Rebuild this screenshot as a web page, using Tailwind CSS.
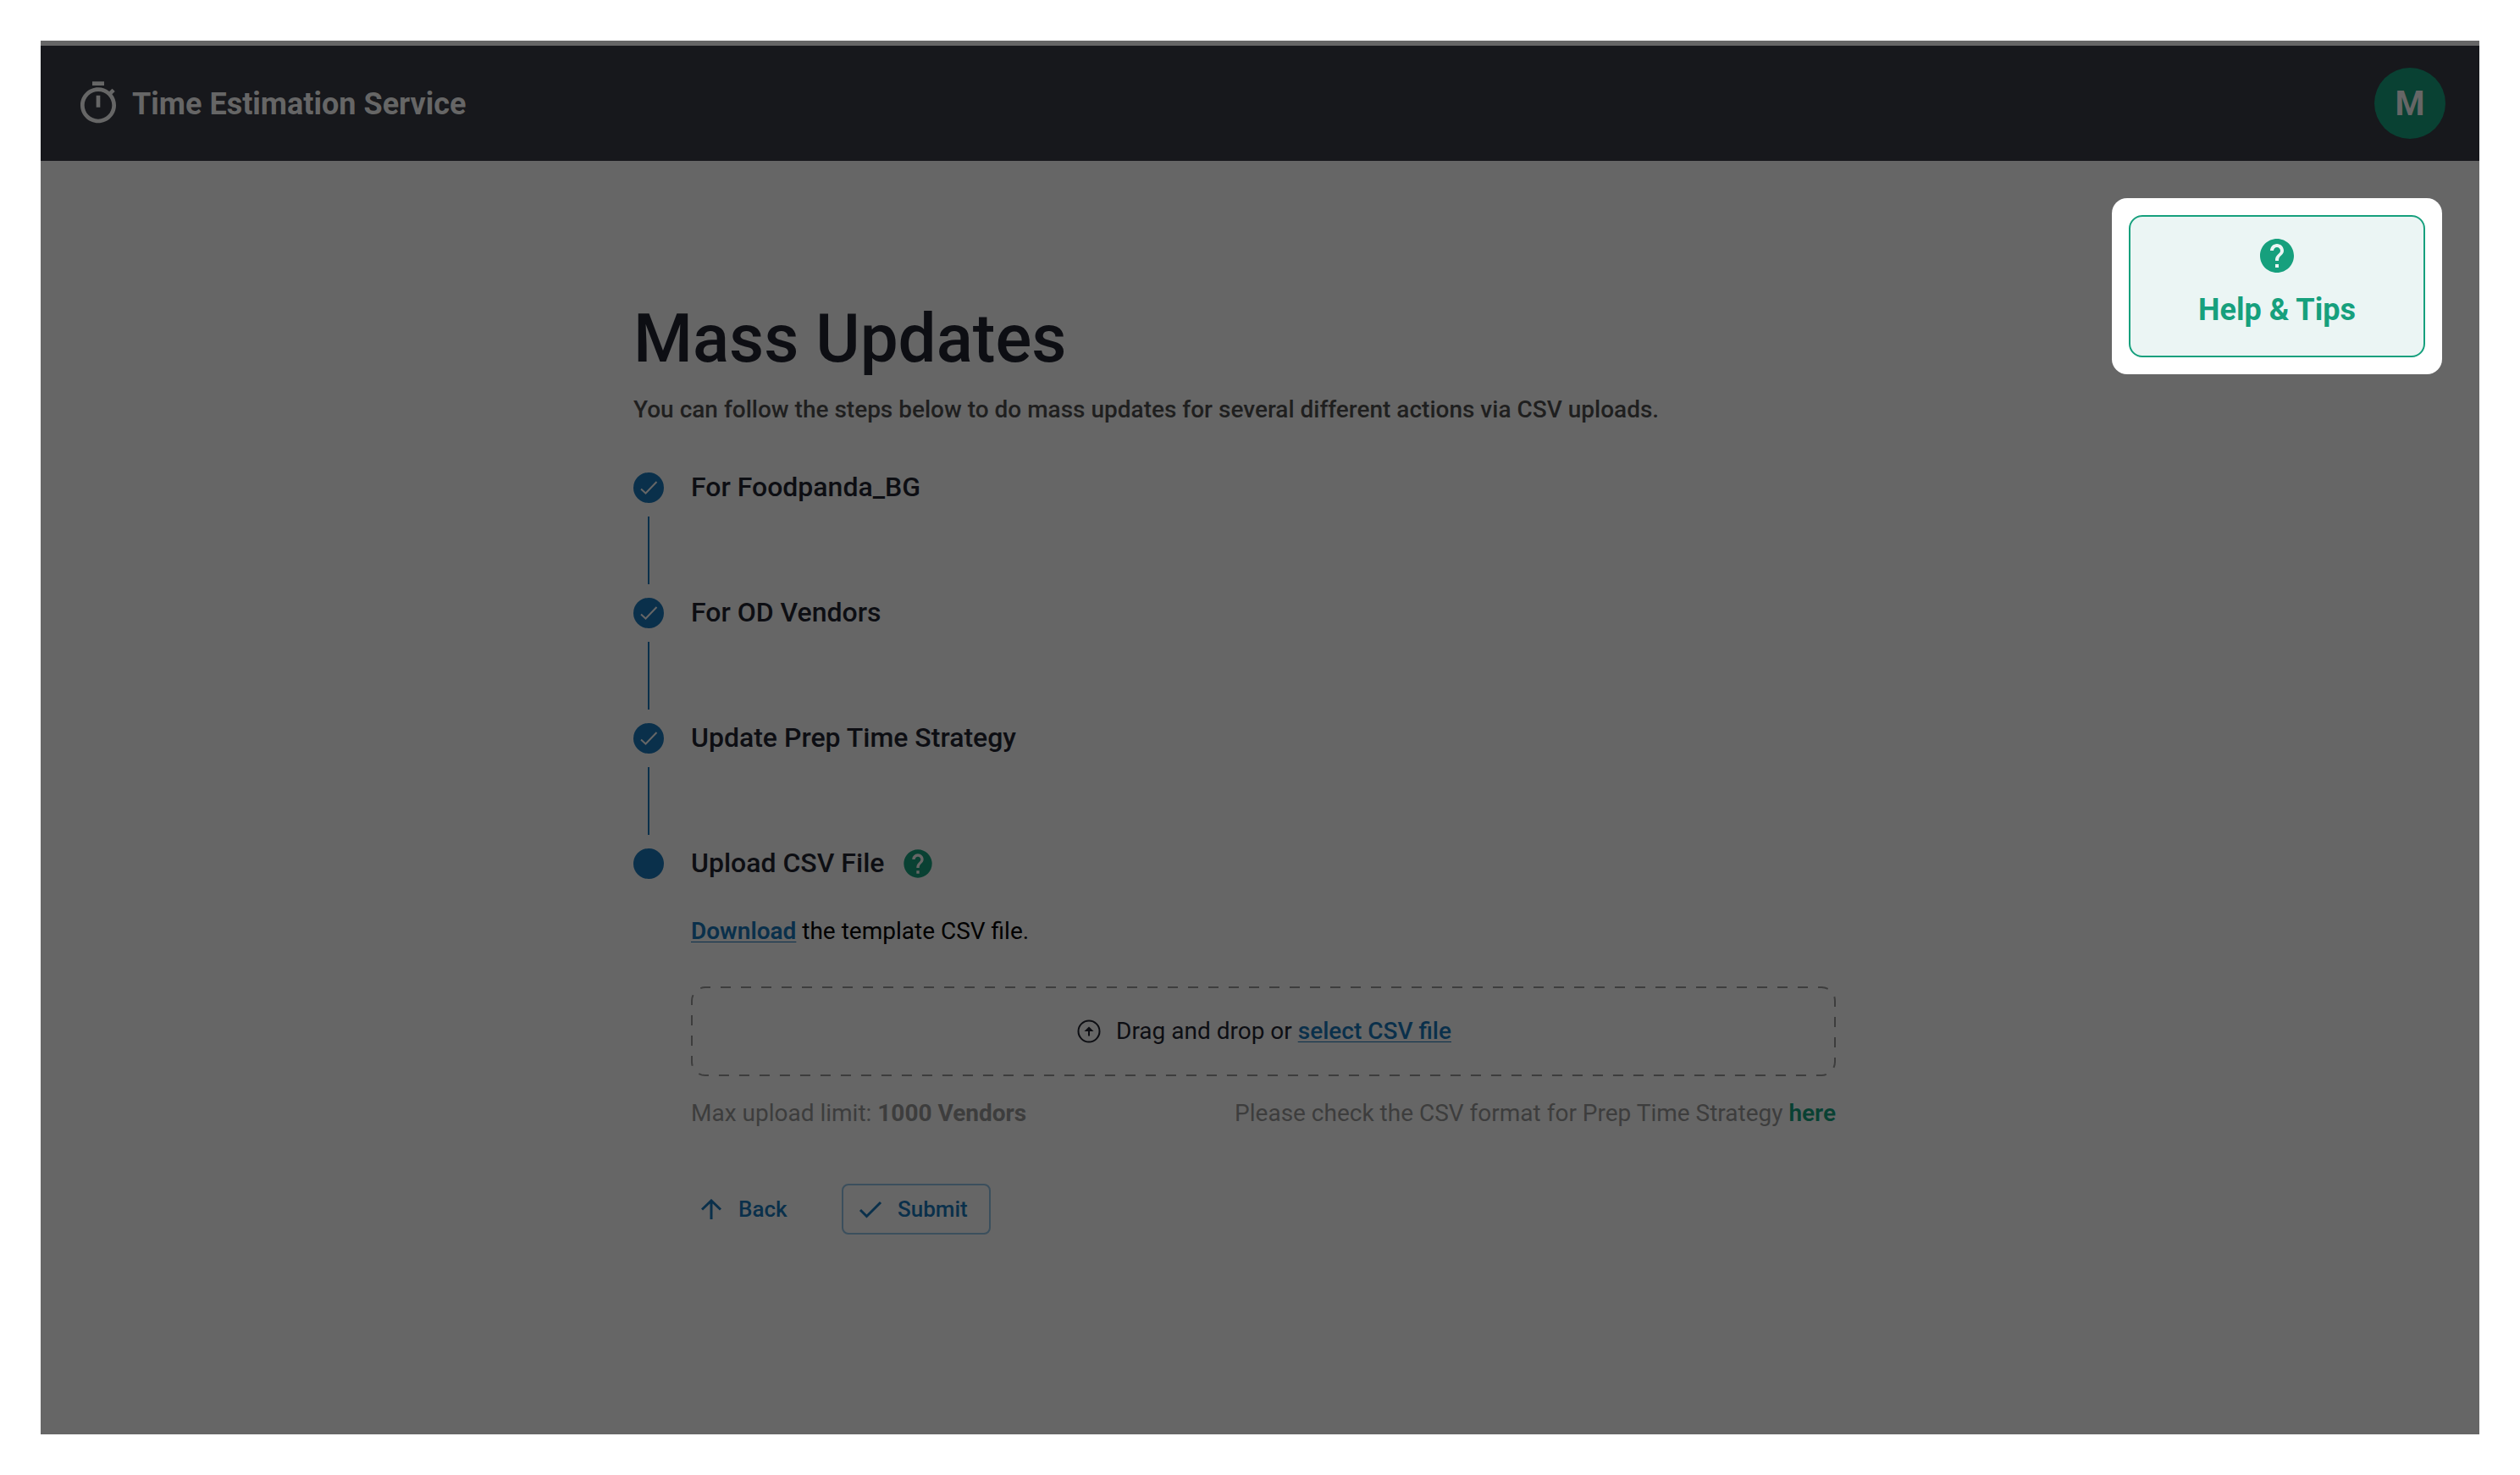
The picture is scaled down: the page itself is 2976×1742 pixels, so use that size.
<!DOCTYPE html>
<html lang="en">
<head>
<meta charset="utf-8">
<meta name="viewport" content="width=device-width, initial-scale=1">
<title>Time Estimation Service</title>
<script src="https://cdn.jsdelivr.net/npm/@tailwindcss/browser@4"></script>
</head>
<body class="min-h-screen bg-white p-12 flex flex-col font-['Roboto',sans-serif]">
<div class="flex-1 flex flex-col bg-[#666666] pt-[6px] text-[28px] leading-10 text-[#0d0e13]">
  <header class="flex items-center justify-between bg-[#17181c] px-10 h-[136px]">
    <div class="flex items-center gap-3 text-[#666666]">
      <svg class="size-14" viewBox="0 0 24 24" fill="currentColor" aria-hidden="true"><path d="M15 1H9v2h6V1zm-4 13h2V8h-2v6zm8.03-6.61 1.42-1.42c-.43-.51-.9-.99-1.41-1.41l-1.42 1.42C16.07 4.74 14.12 4 12 4c-4.97 0-9 4.03-9 9s4.02 9 9 9 9-4.03 9-9c0-2.12-.74-4.07-1.97-5.61zM12 20c-3.87 0-7-3.13-7-7s3.13-7 7-7 7 3.13 7 7-3.13 7-7 7z"/></svg>
      <span class="pt-0.5 text-4xl font-bold">Time Estimation Service</span>
    </div>
    <button class="size-[84px] rounded-full bg-[#094133] pt-0.5 text-[#666666] text-[40px] font-bold" aria-label="Account M">M</button>
  </header>

  <main class="relative flex-1">
    <div class="absolute right-11 top-11 rounded-[18px] bg-white p-5">
      <button class="flex w-[350px] h-[168px] flex-col items-center gap-3 rounded-2xl border-2 border-[#16a07d] bg-[#ebf5f4] pt-[22px] text-[#16a07d]">
        <svg class="size-12" viewBox="0 0 24 24" fill="currentColor" aria-hidden="true"><path d="M12 2C6.48 2 2 6.48 2 12s4.48 10 10 10 10-4.48 10-10S17.52 2 12 2zm1 17h-2v-2h2v2zm2.07-7.75-.9.92C13.45 12.9 13 13.5 13 15h-2v-.5c0-1.1.45-2.1 1.17-2.83l1.24-1.26c.37-.36.59-.86.59-1.41 0-1.1-.9-2-2-2s-2 .9-2 2H8c0-2.21 1.79-4 4-4s4 1.79 4 4c0 .88-.36 1.68-.93 2.25z"/></svg>
        <span class="text-4xl leading-[56px] font-bold">Help &amp; Tips</span>
      </button>
    </div>

    <div class="mx-auto max-w-[1480px] pt-[162px]">
      <h1 class="text-[80px] leading-[96px] font-medium">Mass Updates</h1>
      <p class="mt-4 font-medium text-[#1f1f1f]">You can follow the steps below to do mass updates for several different actions via CSV uploads.</p>

      <ol class="mt-[54px] text-[32px] font-medium">
        <li class="flex gap-8">
          <div class="flex w-9 flex-col items-center gap-4 pb-4">
            <svg class="size-9" viewBox="0 0 36 36" fill="none" aria-hidden="true"><circle cx="18" cy="18" r="18" fill="#0a304b"/><path d="M9 19.5l5.5 5L27.5 11" stroke="#666666" stroke-width="2"/></svg>
            <span class="h-20 w-0.5 bg-[#0a304b]"></span>
          </div>
          <h2 class="leading-[34px]">For Foodpanda_BG</h2>
        </li>
        <li class="flex gap-8">
          <div class="flex w-9 flex-col items-center gap-4 pb-4">
            <svg class="size-9" viewBox="0 0 36 36" fill="none" aria-hidden="true"><circle cx="18" cy="18" r="18" fill="#0a304b"/><path d="M9 19.5l5.5 5L27.5 11" stroke="#666666" stroke-width="2"/></svg>
            <span class="h-20 w-0.5 bg-[#0a304b]"></span>
          </div>
          <h2 class="leading-[34px]">For OD Vendors</h2>
        </li>
        <li class="flex gap-8">
          <div class="flex w-9 flex-col items-center gap-4 pb-4">
            <svg class="size-9" viewBox="0 0 36 36" fill="none" aria-hidden="true"><circle cx="18" cy="18" r="18" fill="#0a304b"/><path d="M9 19.5l5.5 5L27.5 11" stroke="#666666" stroke-width="2"/></svg>
            <span class="h-20 w-0.5 bg-[#0a304b]"></span>
          </div>
          <h2 class="leading-[34px]">Update Prep Time Strategy</h2>
        </li>
        <li class="flex items-center gap-8 h-9">
          <span class="size-9 rounded-full bg-[#0a304b]"></span>
          <div class="flex items-center gap-5">
            <h2 class="pb-0.5 leading-[34px]">Upload CSV File</h2>
            <svg class="size-10 text-[#094133]" viewBox="0 0 24 24" fill="currentColor" role="img" aria-label="Help"><path d="M12 2C6.48 2 2 6.48 2 12s4.48 10 10 10 10-4.48 10-10S17.52 2 12 2zm1 17h-2v-2h2v2zm2.07-7.75-.9.92C13.45 12.9 13 13.5 13 15h-2v-.5c0-1.1.45-2.1 1.17-2.83l1.24-1.26c.37-.36.59-.86.59-1.41 0-1.1-.9-2-2-2s-2 .9-2 2H8c0-2.21 1.79-4 4-4s4 1.79 4 4c0 .88-.36 1.68-.93 2.25z"/></svg>
          </div>
        </li>
      </ol>

      <section class="ml-[68px] mr-[60px] mt-[42px]">
        <p class="text-black"><a href="#" class="font-semibold text-[#0a304b] underline decoration-1 underline-offset-[3px]">Download</a> the template CSV file.</p>
        <div class="relative mt-[45px] flex h-[106px] items-center justify-center gap-4">
          <svg class="absolute inset-0 size-full overflow-visible p-px" fill="none" aria-hidden="true"><rect width="100%" height="100%" rx="16" stroke="#3d3d3d" stroke-width="2" stroke-dasharray="12 12" stroke-dashoffset="6"/></svg>
          <svg class="size-8" viewBox="0 0 32 32" fill="none" aria-hidden="true"><circle cx="16" cy="16" r="12.5" stroke="#0d0e13" stroke-width="2"/><path d="M16 21.5v-8" stroke="#0d0e13" stroke-width="2"/><path d="M16 10.5l5.5 5.5h-11z" fill="#0d0e13"/></svg>
          <p>Drag and drop or <a href="#" class="font-medium text-[#0a304b] underline decoration-1 underline-offset-[3px]">select CSV file</a></p>
        </div>
        <div class="mt-6 flex justify-between text-[#3d3d3d]">
          <p>Max upload limit: <b class="font-bold">1000 Vendors</b></p>
          <p>Please check the CSV format for Prep Time Strategy <a href="#" class="font-semibold text-[#094133]">here</a></p>
        </div>
        <div class="mt-[63px] flex gap-8 text-[26px] font-medium text-[#0a304b]">
          <button class="flex h-[60px] min-w-[146px] items-center gap-5 px-3"><svg class="size-6" viewBox="0 0 24 24" fill="none" stroke="currentColor" stroke-width="3" aria-hidden="true"><path d="M12 24V2M1 12.5L12 2l11 10.5"/></svg>Back</button>
          <button class="flex h-[60px] min-w-44 items-center gap-5 rounded-lg border-2 border-[#3b4f5d] px-5"><svg class="size-6 overflow-visible" viewBox="0 0 24 24" fill="none" stroke="currentColor" stroke-width="3" aria-hidden="true"><path d="M0 13l7.500 7.500L24 4"/></svg>Submit</button>
        </div>
      </section>
    </div>
  </main>
</div>
</body>
</html>
